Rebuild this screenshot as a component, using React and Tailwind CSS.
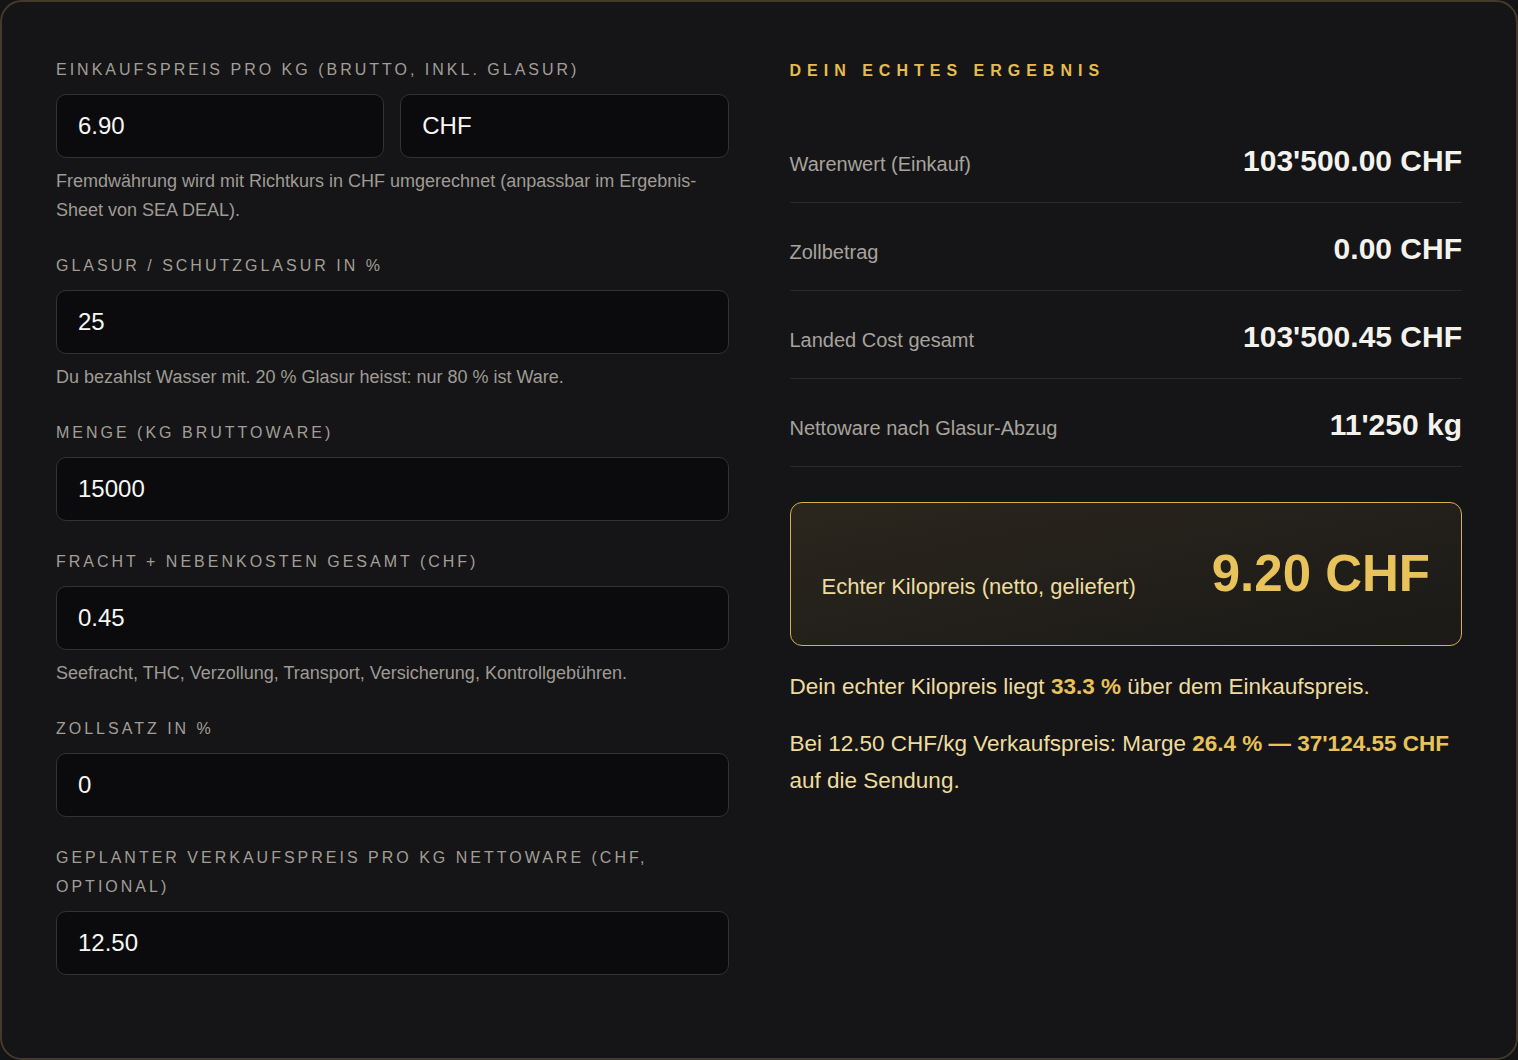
import React from "react";

function Label({ children }) {
  return (
    <div className="text-[16px] leading-[29px] tracking-[3px] uppercase text-[#a29e96] mb-[10px]">
      {children}
    </div>
  );
}

function Input({ value, className = "" }) {
  return (
    <div
      className={
        "h-[64px] rounded-[10px] border border-[#323235] bg-[#0b0b0d] flex items-center px-[21px] text-[24px] text-[#f7f7f5] " +
        className
      }
    >
      {value}
    </div>
  );
}

function Help({ children }) {
  return (
    <div className="mt-[9px] text-[18px] leading-[29px] text-[#9f9b94]">{children}</div>
  );
}

function Row({ label, value }) {
  return (
    <div className="flex items-baseline justify-between pt-[28px] pb-[23px] border-b border-[#29292c]">
      <span className="text-[20px] leading-[28px] text-[#a7a39c]">{label}</span>
      <span className="text-[30px] leading-[36px] font-bold text-[#f4f2ec]">{value}</span>
    </div>
  );
}

export default function App() {
  return (
    <div className="w-[1518px] h-[1060px] bg-[#141416] font-['Liberation_Sans',Arial,sans-serif]">
      <div className="h-[1060px] rounded-[22px] border-2 border-[#433a29] bg-[#151517] px-[54px] pt-[53px] grid grid-cols-2 gap-x-[61px] items-start">
        {/* Left column */}
        <div className="flex flex-col gap-[26px]">
          <div>
            <Label>Einkaufspreis pro kg (brutto, inkl. Glasur)</Label>
            <div className="grid grid-cols-2 gap-[16px]">
              <Input value="6.90" />
              <Input value="CHF" />
            </div>
            <Help>
              Fremdwährung wird mit Richtkurs in CHF umgerechnet (anpassbar im Ergebnis-
              <br />
              Sheet von SEA DEAL).
            </Help>
          </div>
          <div>
            <Label>Glasur / Schutzglasur in %</Label>
            <Input value="25" />
            <Help>Du bezahlst Wasser mit. 20 % Glasur heisst: nur 80 % ist Ware.</Help>
          </div>
          <div>
            <Label>Menge (kg Bruttoware)</Label>
            <Input value="15000" />
          </div>
          <div>
            <Label>Fracht + Nebenkosten gesamt (CHF)</Label>
            <Input value="0.45" />
            <Help>Seefracht, THC, Verzollung, Transport, Versicherung, Kontrollgebühren.</Help>
          </div>
          <div>
            <Label>Zollsatz in %</Label>
            <Input value="0" />
          </div>
          <div>
            <Label>
              Geplanter Verkaufspreis pro kg Nettoware (CHF,
              <br />
              optional)
            </Label>
            <Input value="12.50" />
          </div>
        </div>

        {/* Right column */}
        <div className="flex flex-col">
          <div className="text-[16px] leading-[32px] font-bold tracking-[6px] uppercase text-[#e5bd4f] mb-[28px]">
            Dein echtes Ergebnis
          </div>
          <Row label="Warenwert (Einkauf)" value="103'500.00 CHF" />
          <Row label="Zollbetrag" value="0.00 CHF" />
          <Row label="Landed Cost gesamt" value="103'500.45 CHF" />
          <Row label="Nettoware nach Glasur-Abzug" value="11'250 kg" />

          <div className="mt-[35px] rounded-[12px] border-[1.5px] border-[#d4b04f] bg-gradient-to-br from-[#2b261d] to-[#1b1a18] px-[31px] py-[43px] flex items-end justify-between">
            <span className="text-[22px] leading-[31px] text-[#eedc9f]">
              Echter Kilopreis (netto, geliefert)
            </span>
            <span className="text-[51px] leading-[56px] font-bold text-[#e8c25a]">9.20 CHF</span>
          </div>

          <p className="mt-[22px] text-[22.5px] leading-[37px] text-[#eedc9f]">
            Dein echter Kilopreis liegt <b className="text-[#e8c25a]">33.3 %</b> über dem Einkaufspreis.
          </p>
          <p className="mt-[20px] text-[22.5px] leading-[37px] text-[#eedc9f]">
            Bei 12.50 CHF/kg Verkaufspreis: Marge <b className="text-[#e8c25a]">26.4 % — 37'124.55 CHF</b>
            <br />
            auf die Sendung.
          </p>
        </div>
      </div>
    </div>
  );
}
